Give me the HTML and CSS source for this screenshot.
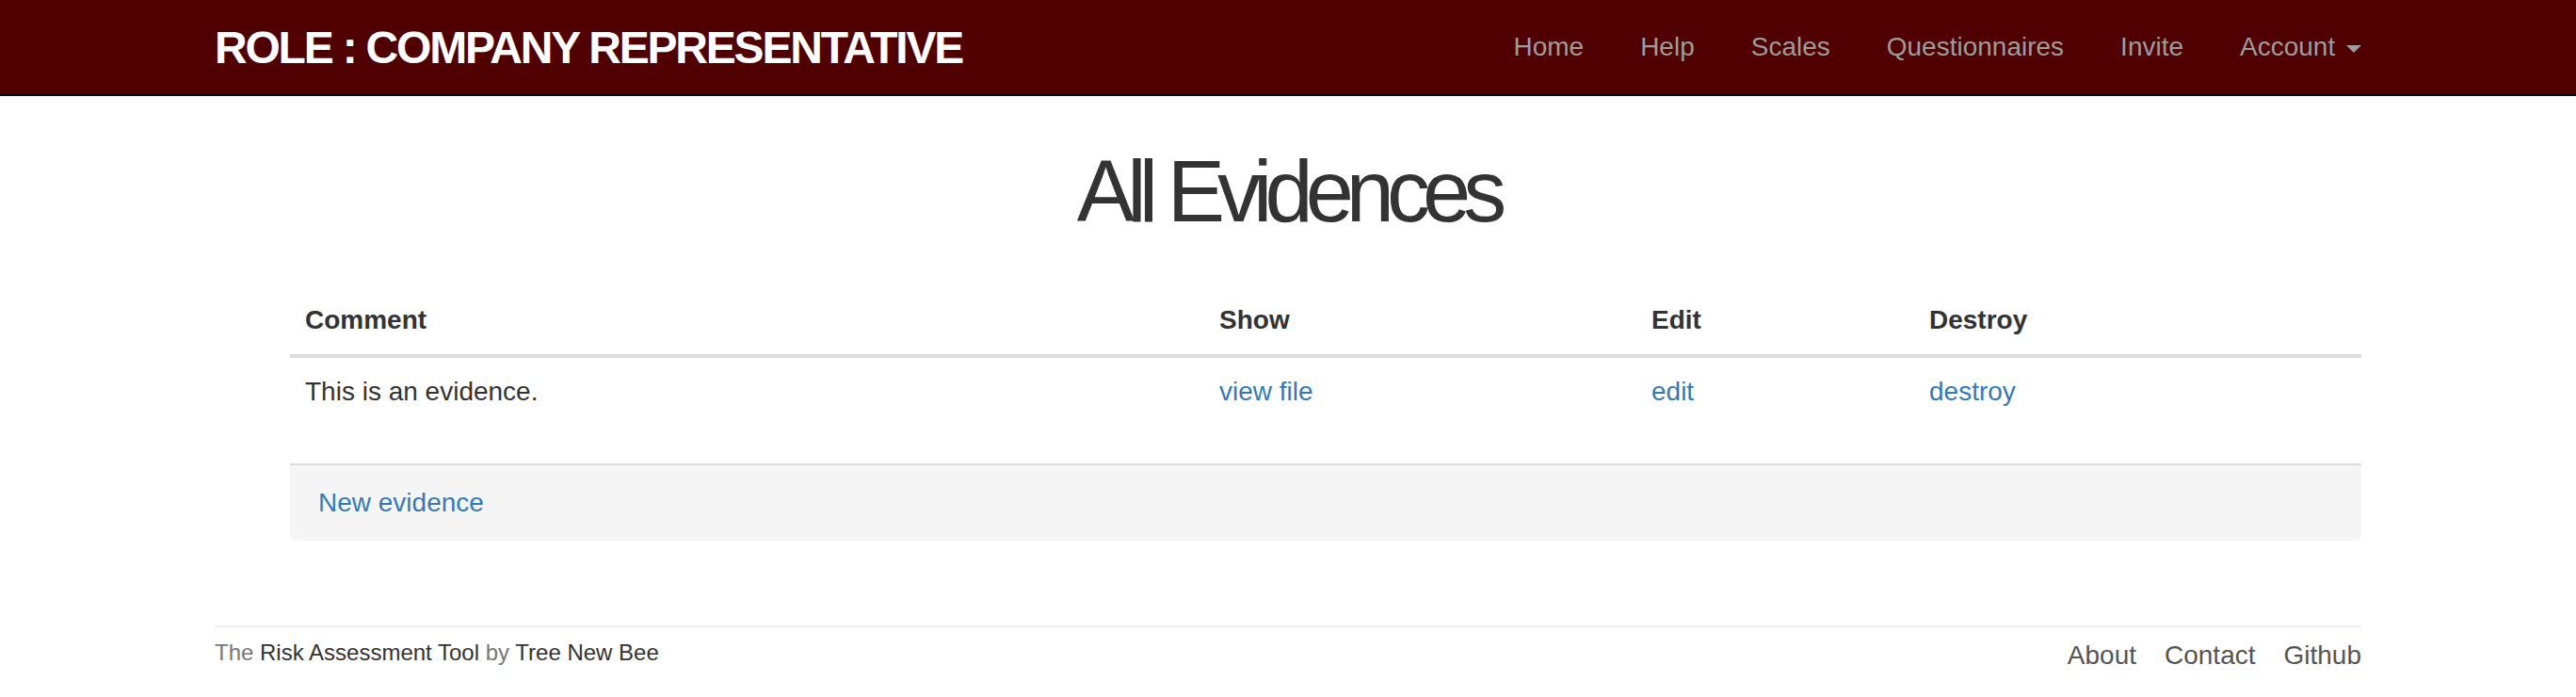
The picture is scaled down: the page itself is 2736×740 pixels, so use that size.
FILE: index.html
```html
<!DOCTYPE html>
<html lang="en">
<head>
<meta charset="utf-8">
<title>All Evidences</title>
<link rel="stylesheet" href="styles.css">
</head>
<body>
<nav class="navbar">
  <div class="container nav-inner">
    <a class="brand" href="#">ROLE : COMPANY REPRESENTATIVE</a>
    <ul class="nav-links">
      <li><a href="#">Home</a></li>
      <li><a href="#">Help</a></li>
      <li><a href="#">Scales</a></li>
      <li><a href="#">Questionnaires</a></li>
      <li><a href="#">Invite</a></li>
      <li><a href="#">Account <span class="caret"></span></a></li>
    </ul>
  </div>
</nav>
<main class="container">
  <h1 class="title">All Evidences</h1>
  <div class="panel">
    <table class="table">
      <thead>
        <tr>
          <th class="col-comment">Comment</th>
          <th class="col-show">Show</th>
          <th class="col-edit">Edit</th>
          <th class="col-destroy">Destroy</th>
        </tr>
      </thead>
      <tbody>
        <tr>
          <td>This is an evidence.</td>
          <td><a href="#">view file</a></td>
          <td><a href="#">edit</a></td>
          <td><a href="#">destroy</a></td>
        </tr>
      </tbody>
    </table>
    <div class="panel-footer"><a href="#">New evidence</a></div>
  </div>
</main>
<footer class="container footer">
  <p class="credit">The <a href="#">Risk Assessment Tool</a> by <a href="#">Tree New Bee</a></p>
  <ul class="footer-links">
    <li><a href="#">About</a></li>
    <li><a href="#">Contact</a></li>
    <li><a href="#">Github</a></li>
  </ul>
</footer>
</body>
</html>
```

FILE: styles.css
```css
* { box-sizing: border-box; }
html, body { margin: 0; padding: 0; }
body {
  font-family: "Liberation Sans", Arial, Helvetica, sans-serif;
  font-size: 28px;
  line-height: 40px;
  color: #333;
  background: #fff;
}
a { color: #337ab7; text-decoration: none; }
ul { list-style: none; margin: 0; padding: 0; }

.container { width: 2280px; margin: 0 auto; }

.navbar {
  background: #500000;
  border-bottom: 2px solid #080808;
  height: 102px;
}
.nav-inner {
  display: flex;
  justify-content: space-between;
  align-items: flex-start;
  height: 100px;
}
.brand {
  color: #fff;
  font-weight: bold;
  font-size: 48px;
  line-height: 40px;
  letter-spacing: -2.2px;
  padding-top: 31px;
}
.nav-links {
  display: flex;
  margin-right: -30px;
}
.nav-links a {
  display: block;
  color: #9d9d9d;
  padding: 30px 30px;
  line-height: 40px;
}
.caret {
  display: inline-block;
  width: 0;
  height: 0;
  margin-left: 4px;
  vertical-align: middle;
  border-top: 8px solid #9d9d9d;
  border-left: 8px solid transparent;
  border-right: 8px solid transparent;
}

.title {
  margin: 51px 0 50px;
  text-align: center;
  font-weight: normal;
  font-size: 92px;
  line-height: 101px;
  letter-spacing: -8px;
  color: #333;
}

.panel { margin-left: 80px; }
.table {
  width: 100%;
  border-collapse: collapse;
  margin-bottom: 40px;
}
.table th, .table td {
  padding: 16px;
  text-align: left;
  line-height: 40px;
  vertical-align: top;
}
.table th { border-bottom: 4px solid #ddd; font-weight: bold; }
.col-comment { width: 971px; }
.col-show { width: 459px; }
.col-edit { width: 295px; }
.col-destroy { width: 475px; }

.panel-footer {
  background: #f5f5f5;
  border-top: 2px solid #ddd;
  padding: 20px 30px;
  border-radius: 0 0 6px 6px;
}

.footer {
  display: flex;
  justify-content: space-between;
  align-items: flex-start;
  margin-top: 90px;
  border-top: 2px solid #eee;
  padding-top: 10px;
}
.credit {
  margin: 0;
  font-size: 24px;
  line-height: 34px;
  color: #777;
}
.credit a { color: #333; }
.footer-links { display: flex; gap: 30px; }
.footer-links a { color: #555; }
```
